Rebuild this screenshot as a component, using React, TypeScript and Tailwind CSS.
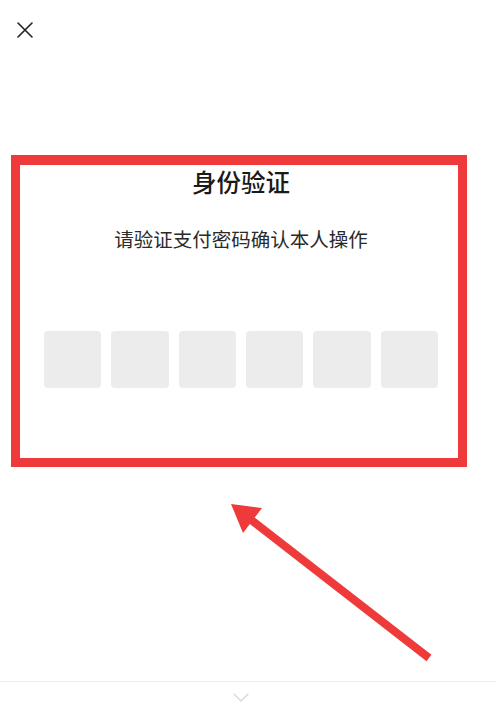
import React from "react";

export default function App() {
  return (
    <div className="relative flex h-[710px] w-[496px] flex-col overflow-hidden bg-white font-['Noto_Sans_CJK_SC','Noto_Sans',sans-serif]">
      <div className="flex h-[60px] items-start pl-[17px] pt-[22px]">
        <svg width="16" height="16" viewBox="0 0 16 16" fill="none" stroke="#222" strokeWidth="1.6" strokeLinecap="round">
          <path d="M1 1 L15 15 M15 1 L1 15" />
        </svg>
      </div>

      <div className="ml-[11px] mt-[95px] h-[312px] w-[456px] border-[9px] border-t-[10px] border-[#ee3a3a] bg-white">
        <div className="flex flex-col items-center pl-[24px] pr-[20px]">
          <div className="pt-[1px] text-[24.5px] font-medium leading-[32px] text-[#1a1a1a]">身份验证</div>
          <div className="mt-[27px] text-[19.5px] leading-[28px] text-[#2a2a2a]">请验证支付密码确认本人操作</div>
          <div className="mt-[78px] grid w-full grid-cols-6 gap-[10px]">
            {[0, 1, 2, 3, 4, 5].map((i) => (
              <div key={i} className="h-[57px] rounded-[4px] bg-[#ececec]" />
            ))}
          </div>
        </div>
      </div>

      <div className="flex-1" />

      <div className="h-[29px] border-t border-[#ececec] flex justify-center pt-[11px] pr-[14px]">
        <svg width="16" height="9" viewBox="0 0 16 9" fill="none" stroke="#d8d8d8" strokeWidth="1.4" strokeLinecap="round" strokeLinejoin="round">
          <path d="M1 1 L8 8 L15 1" />
        </svg>
      </div>

      <svg className="pointer-events-none absolute left-0 top-0" width="496" height="710" viewBox="0 0 496 710">
        <line x1="250" y1="519" x2="429" y2="658" stroke="#ee3a3a" strokeWidth="8" />
        <polygon points="231,504 262,508 243,533" fill="#ee3a3a" />
      </svg>
    </div>
  );
}
